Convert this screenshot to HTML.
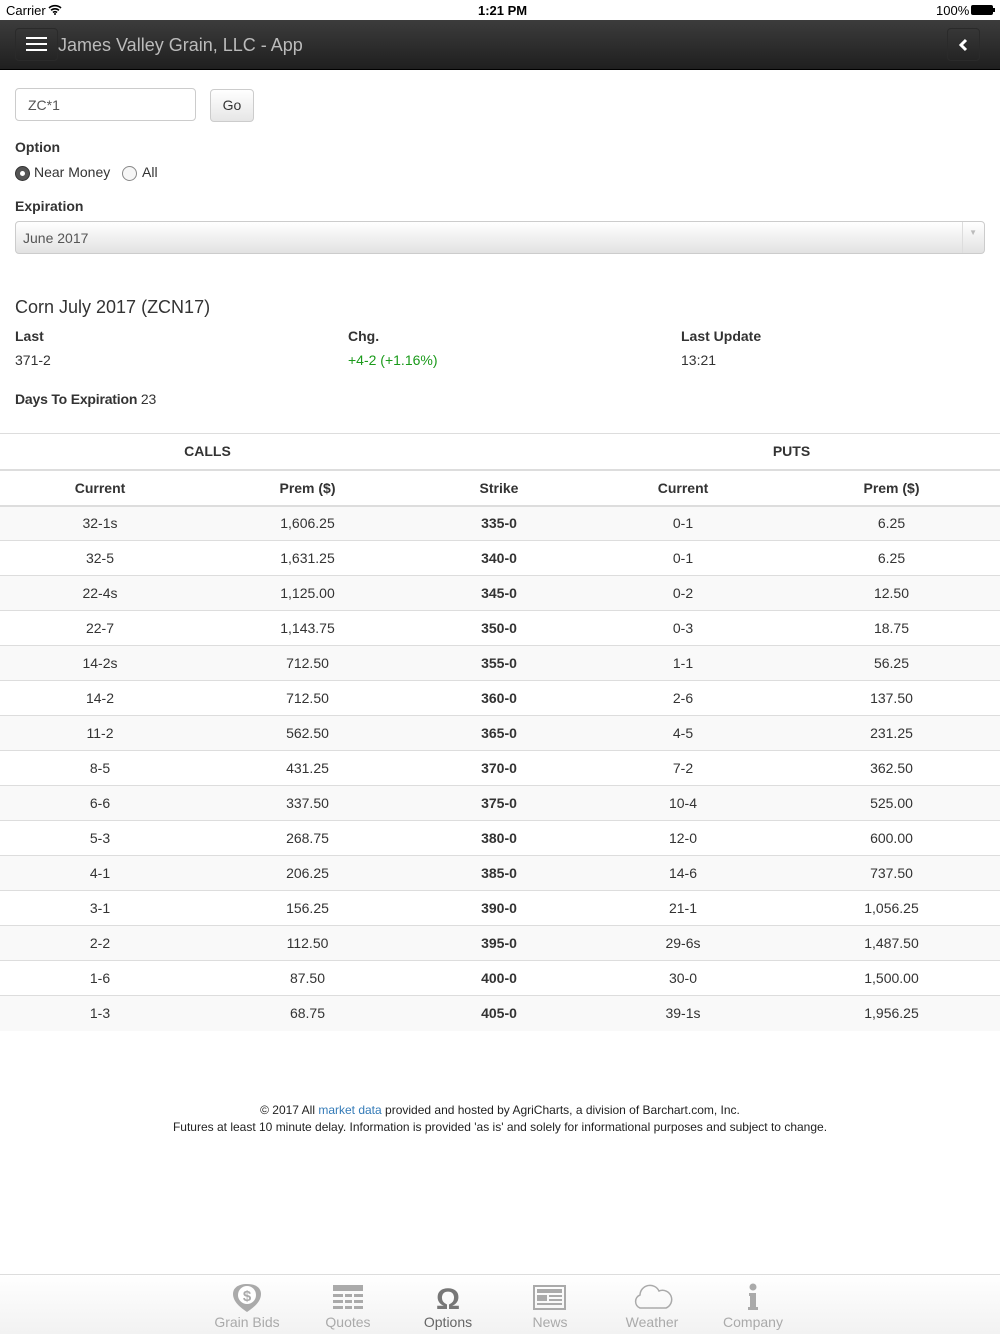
<!DOCTYPE html>
<html><head><meta charset="utf-8"><style>
*{margin:0;padding:0;box-sizing:border-box}
body{width:1000px;height:1334px;position:relative;background:#fff;font-family:"Liberation Sans",Arial,sans-serif;color:#333;overflow:hidden}
.a{position:absolute}
.sb{top:0;left:0;width:1000px;height:20px;background:#fff;font-size:13px;color:#000}
.nav{top:20px;left:0;width:1000px;height:50px;background:linear-gradient(#3c3c3c,#1f1f1f);border-bottom:1px solid #000}
table{position:absolute;left:0;width:1000px;border-collapse:collapse;font-size:14px}
td,th{text-align:center;height:35px;padding:0}
th{font-weight:bold;height:36px}
tbody tr{border-top:1px solid #ddd}
tbody tr:nth-child(odd){background:#f9f9f9}
tbody td:nth-child(3){font-weight:bold}
.tab{width:100px;text-align:center;font-size:14px;color:#aaa}
</style></head><body>
<div class="a sb"><span class="a" style="left:6px;top:3px">Carrier</span>
<svg class="a" style="left:48px;top:4px" width="14" height="11" viewBox="0 0 14 11"><path d="M1 4a9 9 0 0 1 12 0M3 6.3a6 6 0 0 1 8 0M5 8.5a3 3 0 0 1 4 0" stroke="#000" stroke-width="1.6" fill="none"/><circle cx="7" cy="10" r="1" fill="#000"/></svg>
<span class="a" style="left:478px;top:3px;font-weight:bold">1:21 PM</span>
<span class="a" style="left:936px;top:3px">100%</span>
<div class="a" style="left:971px;top:5px;width:22px;height:10px;background:#000;border-radius:2px"></div><div class="a" style="left:993px;top:8px;width:2px;height:4px;background:#000"></div></div>
<div class="a nav">
<div class="a" style="left:15px;top:8px;width:43px;height:33px;border:1px solid #2a2a2a;border-radius:4px"></div>
<div class="a" style="left:26px;top:17px;width:21px;height:2px;background:#fff"></div>
<div class="a" style="left:26px;top:23px;width:21px;height:2px;background:#fff"></div>
<div class="a" style="left:26px;top:29px;width:21px;height:2px;background:#fff"></div>
<span class="a" style="left:58px;top:15px;font-size:18px;color:#bbb">James Valley Grain, LLC - App</span>
<div class="a" style="left:947px;top:8px;width:33px;height:33px;border:1px solid #2a2a2a;border-radius:4px"></div>
<svg class="a" style="left:958px;top:18px" width="10" height="14" viewBox="0 0 10 14"><path d="M8 2L3 7l5 5" stroke="#fff" stroke-width="3" fill="none"/></svg>
</div>
<div class="a" style="left:15px;top:88px;width:181px;height:33px;border:1px solid #ccc;border-radius:4px;font-size:14px;color:#555;padding:8px 12px">ZC*1</div>
<div class="a" style="left:210px;top:89px;width:44px;height:33px;border:1px solid #ccc;border-radius:4px;background:linear-gradient(#fff,#e6e6e6);font-size:14px;text-align:center;line-height:31px">Go</div>
<div class="a" style="left:15px;top:139px;font-size:14px;font-weight:bold">Option</div>
<div class="a" style="left:15px;top:166px;width:15px;height:15px;border-radius:50%;background:#555;border:1px solid #333"><div class="a" style="left:4px;top:4px;width:5px;height:5px;border-radius:50%;background:#fff"></div></div>
<span class="a" style="left:34px;top:164px;font-size:14px">Near Money</span>
<div class="a" style="left:122px;top:166px;width:15px;height:15px;border-radius:50%;border:1px solid #888;background:#f6f6f6"></div>
<span class="a" style="left:142px;top:164px;font-size:14px">All</span>
<div class="a" style="left:15px;top:198px;font-size:14px;font-weight:bold">Expiration</div>
<div class="a" style="left:15px;top:221px;width:970px;height:33px;border:1px solid #ccc;border-radius:4px;background:linear-gradient(#fff,#e2e2e2);font-size:14px;color:#555;padding:8px 7px">June 2017
<div class="a" style="right:0;top:0;width:22px;height:31px;border-left:1px solid #ddd"></div><span class="a" style="right:7px;top:6px;font-size:8px;color:#bbb">▼</span></div>
<div class="a" style="left:15px;top:297px;font-size:18px">Corn July 2017 (ZCN17)</div>
<div class="a" style="left:15px;top:328px;font-size:14px;font-weight:bold">Last</div>
<div class="a" style="left:348px;top:328px;font-size:14px;font-weight:bold">Chg.</div>
<div class="a" style="left:681px;top:328px;font-size:14px;font-weight:bold">Last Update</div>
<div class="a" style="left:15px;top:352px;font-size:14px">371-2</div>
<div class="a" style="left:348px;top:352px;font-size:14px;color:#1a9a1a">+4-2 (+1.16%)</div>
<div class="a" style="left:681px;top:352px;font-size:14px">13:21</div>
<div class="a" style="left:15px;top:391px;font-size:14px;letter-spacing:-0.2px"><b>Days To Expiration</b> 23</div>
<table style="top:433px">
<colgroup><col style="width:200px"><col style="width:215px"><col style="width:168px"><col style="width:200px"><col style="width:217px"></colgroup>
<thead><tr style="border-top:1px solid #ddd;border-bottom:2px solid #ddd"><th colspan="2">CALLS</th><th></th><th colspan="2">PUTS</th></tr>
<tr style="border-bottom:2px solid #ddd"><th>Current</th><th>Prem ($)</th><th>Strike</th><th>Current</th><th>Prem ($)</th></tr></thead>
<tbody>
<tr><td>32-1s</td><td>1,606.25</td><td>335-0</td><td>0-1</td><td>6.25</td></tr>
<tr><td>32-5</td><td>1,631.25</td><td>340-0</td><td>0-1</td><td>6.25</td></tr>
<tr><td>22-4s</td><td>1,125.00</td><td>345-0</td><td>0-2</td><td>12.50</td></tr>
<tr><td>22-7</td><td>1,143.75</td><td>350-0</td><td>0-3</td><td>18.75</td></tr>
<tr><td>14-2s</td><td>712.50</td><td>355-0</td><td>1-1</td><td>56.25</td></tr>
<tr><td>14-2</td><td>712.50</td><td>360-0</td><td>2-6</td><td>137.50</td></tr>
<tr><td>11-2</td><td>562.50</td><td>365-0</td><td>4-5</td><td>231.25</td></tr>
<tr><td>8-5</td><td>431.25</td><td>370-0</td><td>7-2</td><td>362.50</td></tr>
<tr><td>6-6</td><td>337.50</td><td>375-0</td><td>10-4</td><td>525.00</td></tr>
<tr><td>5-3</td><td>268.75</td><td>380-0</td><td>12-0</td><td>600.00</td></tr>
<tr><td>4-1</td><td>206.25</td><td>385-0</td><td>14-6</td><td>737.50</td></tr>
<tr><td>3-1</td><td>156.25</td><td>390-0</td><td>21-1</td><td>1,056.25</td></tr>
<tr><td>2-2</td><td>112.50</td><td>395-0</td><td>29-6s</td><td>1,487.50</td></tr>
<tr><td>1-6</td><td>87.50</td><td>400-0</td><td>30-0</td><td>1,500.00</td></tr>
<tr><td>1-3</td><td>68.75</td><td>405-0</td><td>39-1s</td><td>1,956.25</td></tr>
</tbody></table>
<div class="a" style="left:0;top:1102px;width:1000px;text-align:center;font-size:12px;line-height:17px;color:#222">© 2017 All <span style="color:#337ab7">market data</span> provided and hosted by AgriCharts, a division of Barchart.com, Inc.<br>Futures at least 10 minute delay. Information is provided 'as is' and solely for informational purposes and subject to change.</div>
<div class="a" style="left:0;top:1274px;width:1000px;height:60px;background:linear-gradient(#fff,#f2f2f2);border-top:1px solid #ddd"></div>
<div class="a tab" style="left:197px;top:1282px">
<svg width="34" height="32" viewBox="0 0 34 32"><path d="M17 2C8 2 3 6 3 12c0 8 8 14 14 18 6-4 14-10 14-18 0-6-5-10-14-10z" fill="#aaa"/><circle cx="17" cy="13" r="9" fill="#fff"/><text x="17" y="19" text-anchor="middle" font-size="15" font-weight="bold" fill="#aaa" font-family="Liberation Sans">$</text></svg><div style="margin-top:-3px">Grain Bids</div></div>
<div class="a tab" style="left:298px;top:1284px">
<svg width="32" height="30" viewBox="0 0 32 30"><rect x="1" y="1" width="30" height="6" fill="#aaa"/><g fill="#aaa"><rect x="1" y="10" width="10" height="3"/><rect x="13" y="10" width="7" height="3"/><rect x="22" y="10" width="9" height="3"/><rect x="1" y="16" width="10" height="3"/><rect x="13" y="16" width="7" height="3"/><rect x="22" y="16" width="9" height="3"/><rect x="1" y="22" width="10" height="3"/><rect x="13" y="22" width="7" height="3"/><rect x="22" y="22" width="9" height="3"/></g></svg><div style="margin-top:-3px">Quotes</div></div>
<div class="a tab" style="left:398px;top:1282px;color:#666">
<div style="font-size:30px;font-weight:bold;height:30px;line-height:36px;color:#777">Ω</div><div style="margin-top:2px">Options</div></div>
<div class="a tab" style="left:500px;top:1282px">
<svg width="34" height="30" viewBox="0 0 34 30"><rect x="1" y="4" width="31" height="23" fill="none" stroke="#aaa" stroke-width="2"/><rect x="4" y="7" width="25" height="4" fill="#aaa"/><rect x="4" y="13" width="10" height="6" fill="#aaa"/><g fill="#aaa"><rect x="16" y="13" width="13" height="2"/><rect x="16" y="17" width="13" height="2"/><rect x="4" y="21" width="25" height="2"/></g></svg><div style="margin-top:-1px">News</div></div>
<div class="a tab" style="left:602px;top:1282px">
<svg width="42" height="30" viewBox="0 0 42 30"><path d="M9 26a7 7 0 0 1 0-13 10 10 0 0 1 19-4 8 8 0 0 1 7 17z" fill="none" stroke="#aaa" stroke-width="1.5"/></svg><div style="margin-top:-1px">Weather</div></div>
<div class="a tab" style="left:703px;top:1282px">
<svg width="20" height="30" viewBox="0 0 20 30"><circle cx="10" cy="5" r="3.5" fill="#aaa"/><path d="M6 11h7v14h2v3H5v-3h2V14H6z" fill="#aaa"/></svg><div style="margin-top:-1px">Company</div></div>
</body></html>
